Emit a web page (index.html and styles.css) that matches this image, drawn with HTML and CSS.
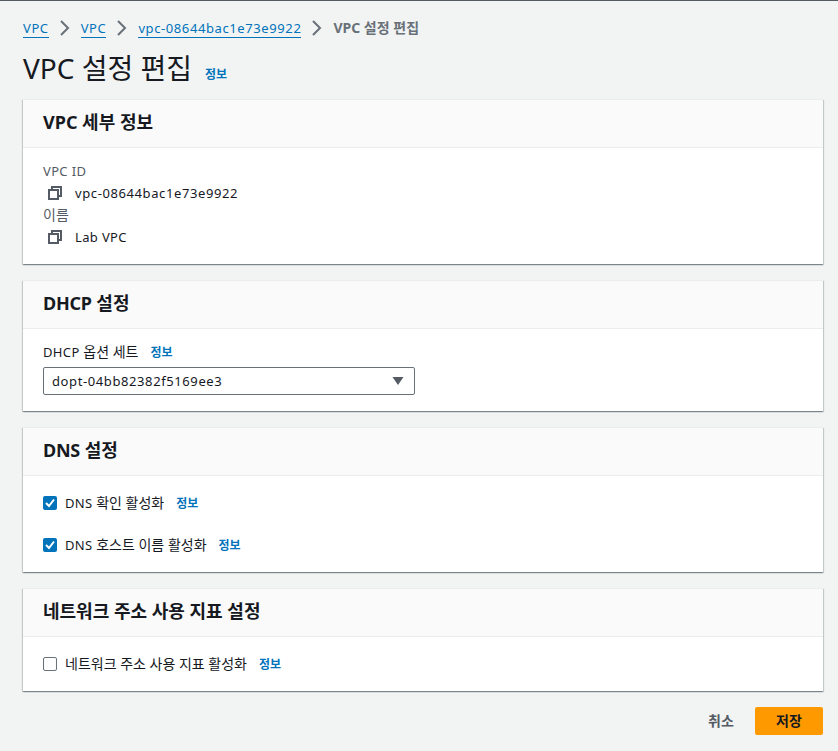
FILE: index.html
```html
<!DOCTYPE html>
<html lang="ko">
<head>
<meta charset="utf-8">
<title>VPC 설정 편집</title>
<link rel="stylesheet" href="styles.css">
</head>
<body>
<nav class="crumbs">
<a>VPC</a><svg class="chev" viewBox="0 0 16 16"><path d="M4 1l7 7-7 7"/></svg><a>VPC</a><svg class="chev" viewBox="0 0 16 16"><path d="M4 1l7 7-7 7"/></svg><a class="id">vpc-08644bac1e73e9922</a><svg class="chev" viewBox="0 0 16 16"><path d="M4 1l7 7-7 7"/></svg><span>VPC 설정 편집</span>
</nav>
<header class="title"><h1>VPC 설정 편집</h1><a class="info">정보</a></header>
<main>
<section class="card details">
<h2>VPC 세부 정보</h2>
<div class="body">
<div class="label"><span class="latin">VPC ID</span></div>
<div class="value"><svg class="copy" viewBox="0 0 16 16"><path d="M2 5h9v9H2zM5 5V2h9v9h-3"/></svg><span class="id">vpc-08644bac1e73e9922</span></div>
<div class="label">이름</div>
<div class="value"><svg class="copy" viewBox="0 0 16 16"><path d="M2 5h9v9H2zM5 5V2h9v9h-3"/></svg><span class="latin">Lab VPC</span></div>
</div>
</section>
<section class="card dhcp">
<h2><span class="latin">DHCP</span> 설정</h2>
<div class="body">
<div class="field"><span class="latin">DHCP</span> 옵션 세트<a class="info">정보</a></div>
<div class="select"><span class="id">dopt-04bb82382f5169ee3</span><svg viewBox="0 0 12 8"><path d="M0.5 0h11L6 8z"/></svg></div>
</div>
</section>
<section class="card dns">
<h2><span class="latin">DNS</span> 설정</h2>
<div class="body">
<div class="check"><i class="box on"><svg viewBox="0 0 14 14"><path d="M3 7l3 3 5-6.5"/></svg></i><span><span class="latin">DNS</span> 확인 활성화<a class="info">정보</a></span></div>
<div class="check"><i class="box on"><svg viewBox="0 0 14 14"><path d="M3 7l3 3 5-6.5"/></svg></i><span><span class="latin">DNS</span> 호스트 이름 활성화<a class="info">정보</a></span></div>
</div>
</section>
<section class="card metrics">
<h2>네트워크 주소 사용 지표 설정</h2>
<div class="body">
<div class="check"><i class="box"></i><span>네트워크 주소 사용 지표 활성화<a class="info">정보</a></span></div>
</div>
</section>
</main>
<footer><button class="cancel">취소</button><button class="save">저장</button></footer>
</body>
</html>
```
FILE: styles.css
```css
* { box-sizing: border-box; }
body { margin: 0; height: 751px; overflow: hidden; border-top: 1px solid #545b64; background: #f2f3f3; color: #16191f; font: 14px/22px "Noto Sans", "Noto Sans CJK KR", sans-serif; padding: 16px 15px 0 23px; }
a { color: #0073bb; }
.crumbs { display: flex; height: 22px; align-items: center; white-space: nowrap; }
.crumbs a { font-size: 13px; line-height: 18px; letter-spacing: .6px; border-bottom: 1px solid #0073bb; }
.crumbs span { color: #687078; font-weight: 700; }
.id { font-size: 13px; letter-spacing: .6px; }
.latin { font-size: 13px; letter-spacing: .35px; }
h2 .latin { font-size: 18px; letter-spacing: -.25px; }
.chev { width: 16px; height: 16px; margin: 0 8px; fill: none; stroke: #687078; stroke-width: 2; }
.title { display: flex; align-items: baseline; height: 60px; padding-top: 11px; }
h1 { font-size: 28px; line-height: 36px; font-weight: 400; margin: 0 13px 0 0; }
.info { font-size: 12px; line-height: 18px; font-weight: 700; margin-left: 12px; }
.title .info { margin: 0; }
main { display: grid; gap: 16px; }
.card { background: #fff; box-shadow: 0 1px 1px rgba(0,28,36,.3), 1px 1px 1px rgba(0,28,36,.15), -1px 1px 1px rgba(0,28,36,.15); }
h2 { margin: 0; height: 49px; padding: 11px 20px; background: #fafafa; border-top: 1px solid #eaeded; border-bottom: 1px solid #eaeded; font-size: 18px; line-height: 22px; font-weight: 700; }
.body { padding: 12px 20px; }
.details { height: 165px; }
.label { height: 22px; color: #545b64; }
.value { display: flex; align-items: center; height: 22px; }
.copy { width: 16px; height: 16px; margin: 0 12px 0 4px; fill: none; stroke: #545b64; stroke-width: 2; }
.dhcp { height: 131px; }
.field { height: 22px; }
.select { display: flex; align-items: center; justify-content: space-between; width: 372px; height: 28px; margin-top: 4px; border: 1px solid #687078; border-radius: 2px; padding: 0 10px 0 8px; }
.select svg { width: 12px; height: 8px; fill: #545b64; }
.dns { height: 145px; }
.check { display: flex; align-items: center; height: 22px; margin: 4px 0 20px; }
.box { width: 14px; height: 14px; margin-right: 8px; border: 1px solid #687078; border-radius: 2px; background: #fff; }
.box.on { border: 0; background: #0073bb; }
.box svg { display: block; fill: none; stroke: #fff; stroke-width: 2; }
.metrics { height: 103px; }
footer { display: flex; justify-content: flex-end; margin-top: 16px; }
button { border: 0; border-radius: 2px; height: 28px; padding: 0; font: 700 14px/28px "Noto Sans", "Noto Sans CJK KR", sans-serif; width: 68px; background: none; color: #545b64; }
.save { background: #ff9900; color: #16191f; }
```
